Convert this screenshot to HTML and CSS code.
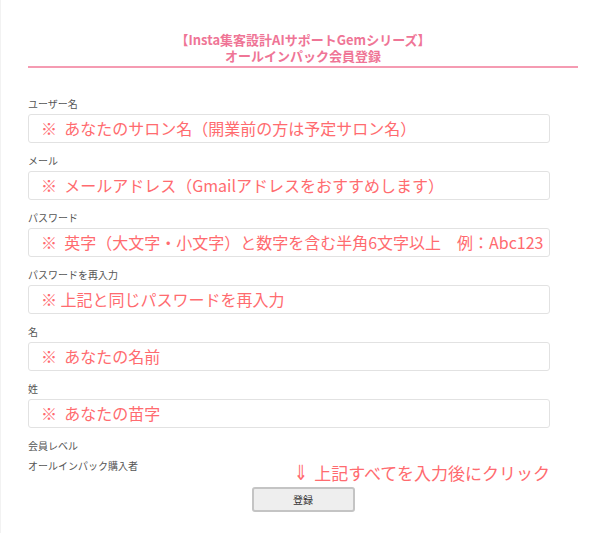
FILE: index.html
```html
<!DOCTYPE html>
<html lang="ja">
<head>
<meta charset="utf-8">
<link rel="stylesheet" href="styles.css">
</head>
<body>
<div class="page">
  <div class="header">
    <div class="title">【Insta集客設計AIサポートGemシリーズ】</div>
    <div class="title">オールインパック会員登録</div>
  </div>
  <form class="form">
    <div class="field">
      <label class="label">ユーザー名</label>
      <div class="input">※&nbsp; あなたのサロン名（開業前の方は予定サロン名）</div>
    </div>
    <div class="field">
      <label class="label">メール</label>
      <div class="input">※&nbsp; メールアドレス（Gmailアドレスをおすすめします）</div>
    </div>
    <div class="field">
      <label class="label">パスワード</label>
      <div class="input">※&nbsp; 英字（大文字・小文字）と数字を含む半角6文字以上　例：Abc123</div>
    </div>
    <div class="field">
      <label class="label">パスワードを再入力</label>
      <div class="input">※ 上記と同じパスワードを再入力</div>
    </div>
    <div class="field">
      <label class="label">名</label>
      <div class="input">※&nbsp; あなたの名前</div>
    </div>
    <div class="field">
      <label class="label">姓</label>
      <div class="input">※&nbsp; あなたの苗字</div>
    </div>
    <div class="level-row">
      <div class="level">
        <div class="level-label">会員レベル</div>
        <div class="level-value">オールインパック購入者</div>
      </div>
      <div class="notice"><span class="arrow">⇓</span>上記すべてを入力後にクリック</div>
    </div>
    <div class="actions">
      <button type="button" class="submit">登録</button>
    </div>
  </form>
</div>
</body>
</html>
```
FILE: styles.css
```css
* { box-sizing: border-box; }
html, body { margin: 0; padding: 0; background: #fff; }
body {
  font-family: "Noto Sans CJK JP", "Noto Sans", sans-serif;
  color: #555;
}
.page {
  width: 600px;
  height: 533px;
  padding: 32px 22px 0 27px;
  border-left: 1px solid #f2f2f2;
}
.header {
  border-bottom: 2px solid #f59bb2;
  padding-bottom: 2px;
}
.title {
  text-align: center;
  color: #ef7596;
  font-weight: bold;
  font-size: 13px;
  line-height: 16px;
}
.form {
  padding-top: 29px;
}
.field {
  width: 522px;
  margin-bottom: 11px;
}
.label {
  display: block;
  font-size: 10px;
  line-height: 14px;
  color: #555;
  margin-bottom: 3px;
}
.input {
  height: 29px;
  border: 1px solid #e2e2e2;
  border-radius: 3px;
  padding: 0 0 0 12px;
  font-size: 16px;
  line-height: 27px;
  color: #ff6b6f;
  white-space: nowrap;
  overflow: hidden;
}
.level-row {
  width: 522px;
  display: flex;
  justify-content: space-between;
  margin-top: -3px;
}
.level {
  font-size: 10px;
  line-height: 20px;
  color: #555;
}
.notice {
  font-size: 17px;
  line-height: 20px;
  color: #ff6b6f;
  margin-top: 27px;
  display: flex;
  align-items: center;
}
.arrow {
  font-family: "DejaVu Sans", sans-serif;
  font-size: 21px;
  line-height: 20px;
  margin-right: 5px;
  transform: scaleX(0.8);
}
.actions {
  display: flex;
  justify-content: center;
  margin-top: 4px;
}
.submit {
  width: 103px;
  height: 25px;
  background: #eeeeee;
  border: 2px solid #c4c4c4;
  border-radius: 3px;
  font-family: "Noto Sans CJK JP", sans-serif;
  font-size: 10px;
  color: #333;
  padding: 0;
}
```
